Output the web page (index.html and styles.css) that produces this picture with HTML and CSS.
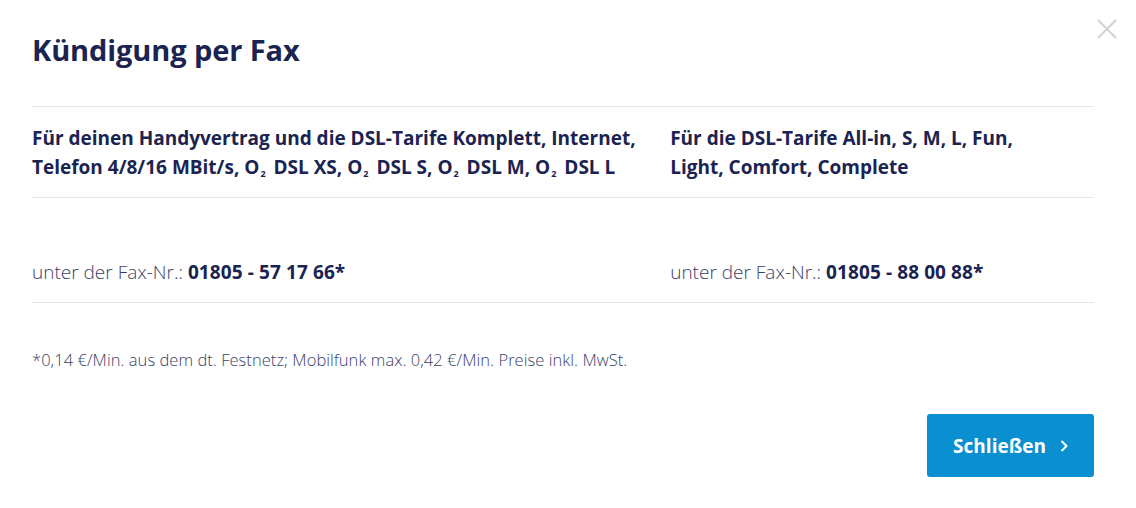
FILE: index.html
```html
<!DOCTYPE html>
<html lang="de">
<head>
    <meta charset="UTF-8">
    <meta name="viewport" content="width=device-width, initial-scale=1.0">
    <title>Kündigung per Fax</title>
    <link rel="stylesheet" href="styles.css">
</head>
<body>
    <div class="modal">
        <button class="close" aria-label="Schließen">
            <svg width="20" height="20" viewBox="0 0 20 20"><path d="M1 1L19 19M19 1L1 19" stroke="#cfd3d6" stroke-width="2" fill="none"/></svg>
        </button>
        <h1 class="title">Kündigung per Fax</h1>

        <div class="row row-head">
            <div class="col col-left">Für deinen Handyvertrag und die DSL-Tarife Komplett, Internet, Telefon 4/8/16 MBit/s, O<sub>2</sub> DSL XS, O<sub>2</sub> DSL S, O<sub>2</sub> DSL M, O<sub>2</sub> DSL L</div>
            <div class="col col-right">Für die DSL-Tarife All-in, S, M, L, Fun, Light, Comfort, Complete</div>
        </div>

        <div class="row row-fax">
            <div class="col col-left">unter der Fax-Nr.: <strong>01805 - 57 17 66*</strong></div>
            <div class="col col-right">unter der Fax-Nr.: <strong>01805 - 88 00 88*</strong></div>
        </div>

        <p class="note">*0,14 €/Min. aus dem dt. Festnetz; Mobilfunk max. 0,42 €/Min. Preise inkl. MwSt.</p>

        <div class="actions">
            <button class="btn">Schließen
                <svg class="chev" width="8" height="12" viewBox="0 0 8 12"><path d="M1.5 1L6.5 6L1.5 11" stroke="#fff" stroke-width="2" fill="none"/></svg>
            </button>
        </div>
    </div>
</body>
</html>
```

FILE: styles.css
```css
body { margin: 0; background: #fff; font-family: "Open Sans", "Noto Sans", sans-serif; color: #1b2351; }
.modal { position: relative; padding: 28px 42px 30px 32px; }
.close { position: absolute; top: 19px; right: 19px; background: none; border: none; padding: 0; cursor: pointer; }
.title { margin: 0; font-size: 29px; font-weight: 700; line-height: 44px; padding-bottom: 34px; border-bottom: 1px solid #e6e7ea; letter-spacing: -0.1px; }
.row { display: flex; border-bottom: 1px solid #e6e7ea; }
.col { box-sizing: border-box; }
.col-left { width: 60%; padding-right: 12px; }
.col-right { width: 40%; padding-right: 48px; padding-left: 1px; }
.row-head { padding: 17px 0 15px; font-size: 19px; font-weight: 700; line-height: 29px; }
.row-head sub { font-size: 9px; line-height: 0; vertical-align: -3px; margin: 0 3px 0 1px; }
.row-fax { padding: 62px 0 18px; font-size: 19px; line-height: 24px; font-weight: 300; color: #3a4068; }
.row-fax strong { font-weight: 700; color: #1b2351; letter-spacing: 0.1px; }
.note { margin: 46px 0 0; font-size: 16.5px; line-height: 22px; font-weight: 300; color: #3a4068; letter-spacing: 0.05px; }
.actions { display: flex; justify-content: flex-end; margin-top: 43px; }
.btn { display: flex; align-items: center; justify-content: center; gap: 14px; width: 167px; height: 63px; background: #0a8fd1; color: #fff; border: none; border-radius: 3px; font-family: inherit; font-size: 19px; font-weight: 700; cursor: pointer; }
```
